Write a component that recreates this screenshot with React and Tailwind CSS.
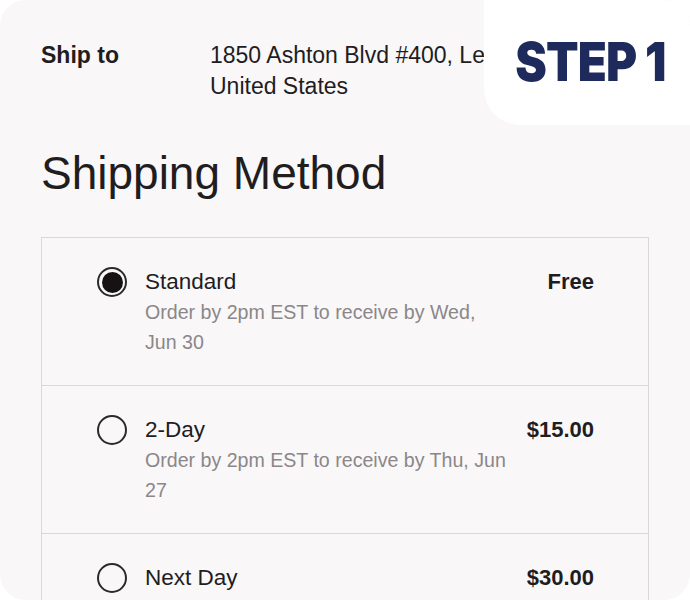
import React from "react";

const options = [
  {
    name: "Standard",
    note: "Order by 2pm EST to receive by Wed, Jun 30",
    price: "Free",
    selected: true,
  },
  {
    name: "2-Day",
    note: "Order by 2pm EST to receive by Thu, Jun 27",
    price: "$15.00",
  },
  {
    name: "Next Day",
    note: "Order by 2pm EST to receive by Fri, Jun 26",
    price: "$30.00",
  },
];

function Radio({ checked }) {
  return (
    <span className="flex h-[30px] w-[30px] shrink-0 items-center justify-center rounded-full border-2 border-[#2a2a2a]">
      {checked && <span className="h-[21px] w-[21px] rounded-full bg-[#161214]" />}
    </span>
  );
}

export default function App() {
  return (
    <div className="h-[600px] w-[690px] bg-white" style={{ fontFamily: "'Liberation Sans', Arial, sans-serif" }}>
      <div className="relative h-[600px] w-[690px] overflow-hidden rounded-[26px] bg-[#f9f7f8] text-[#211d1f]">
        {/* Step badge */}
        <div className="absolute right-0 top-0 z-10 flex h-[125px] w-[206px] items-center justify-center rounded-bl-[36px] rounded-tr-[26px] bg-white pb-[2px] pl-[6px]">
          <span
            className="inline-block scale-x-[0.88] text-[54px] font-black leading-none tracking-[-1px] text-[#1f2a5c]"
            style={{ fontFamily: "Inter, 'Liberation Sans', sans-serif" }}
          >
            STEP 1
          </span>
        </div>

        {/* Ship to */}
        <div className="flex pl-[41px] pt-[40px] text-[23px] leading-[31px]">
          <div className="w-[169px] font-bold">Ship to</div>
          <div className="whitespace-nowrap">
            <div>1850 Ashton Blvd #400, Lehi, UT 84043</div>
            <div>United States</div>
          </div>
        </div>

        {/* Heading */}
        <h1 className="pl-[41px] pt-[43px] text-[46px] font-normal leading-[56px]">Shipping Method</h1>

        {/* Options */}
        <div className="mx-[41px] mt-[36px] border border-[#d9d7d8]">
          {options.map((o) => (
            <div key={o.name} className="flex h-[148px] gap-[18px] border-b border-[#d9d7d8] pl-[55px] pr-[54px] pt-[29px]">
              <div className="flex h-[30px] items-center">
                <Radio checked={o.selected} />
              </div>
              <div className="w-[365px]">
                <div className="text-[22.5px] leading-[30px]">{o.name}</div>
                <div className="text-[19.6px] leading-[30px] text-[#8b8789]">{o.note}</div>
              </div>
              <div className="ml-auto text-[22px] font-bold leading-[30px]">{o.price}</div>
            </div>
          ))}
        </div>
      </div>
    </div>
  );
}
